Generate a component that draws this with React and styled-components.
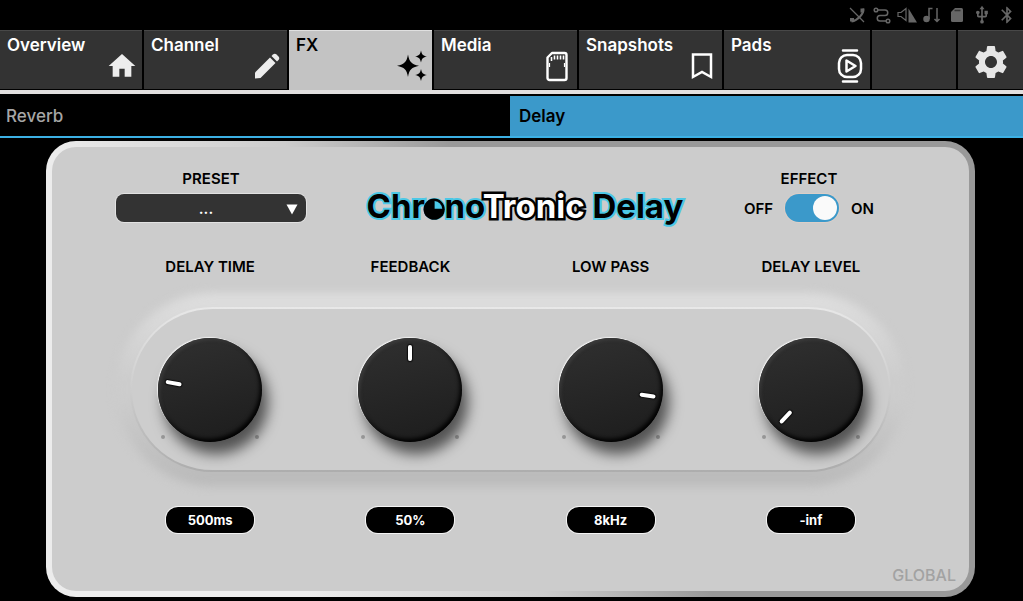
import React, { useState } from 'react';
import styled, { createGlobalStyle } from 'styled-components';
import { MdBluetooth, MdHome, MdSettings, MdUsb } from 'react-icons/md';

const GlobalStyle = createGlobalStyle`
  * {
    box-sizing: border-box;
  }

  body {
    margin: 0;
    background: #000;
    color: #000;
    font-family: 'Inter', 'Liberation Sans', sans-serif;
  }

  button, input, select {
    font: inherit;
    margin: 0;
  }
`;

const Page = styled.div`
  display: flex;
  flex-direction: column;
  min-height: 100vh;
`;

const StatusBar = styled.div`
  display: flex;
  justify-content: flex-end;
  align-items: center;
  gap: 5px;
  height: 30px;
  padding-right: 6px;
  color: #666;

  svg {
    width: 20px;
    height: 20px;
  }
`;

const TabBar = styled.nav`
  display: grid;
  grid-template-columns: 142fr 143fr 143fr 143fr 143fr 146fr 84fr 65fr;
  gap: 2px;
  height: 64px;
  border-bottom: 4px solid #e2dfdf;
`;

const Tab = styled.button`
  display: flex;
  justify-content: space-between;
  height: ${(props) => (props.$active ? '60px' : '59px')};
  padding: 5px 4px 0 7px;
  border: none;
  border-top: 1px solid ${(props) => (props.$active ? '#e0e0e0' : '#484848')};
  background: ${(props) => (props.$active ? '#c3c3c3' : '#333')};
  color: ${(props) => (props.$active ? '#000' : '#fff')};
  font-size: 17px;
  font-weight: 600;
  line-height: 18px;
  cursor: pointer;
`;

const TabIcon = styled.span`
  display: flex;
  justify-content: center;
  align-items: center;
  width: 32px;
  height: 36px;
  margin-top: 12px;

  svg {
    flex: none;
  }
`;

const SettingsTab = styled(Tab)`
  justify-content: center;
  align-items: center;
  padding: 3px 0 0;
  color: #e6e6e6;
`;

const SubTabBar = styled.nav`
  display: grid;
  grid-template-columns: 510fr 513fr;
  margin-top: 2px;
  border-bottom: 2px solid #3cb0e4;
`;

const SubTab = styled.button`
  height: 40px;
  padding: 0 ${(props) => (props.$active ? '9px' : '6px')};
  border: none;
  background: ${(props) => (props.$active ? '#3b99ca' : '#000')};
  color: ${(props) => (props.$active ? '#000' : '#a6a6a6')};
  font-size: 17px;
  font-weight: ${(props) => (props.$active ? 600 : 500)};
  text-align: left;
  cursor: pointer;
`;

const Panel = styled.main`
  margin: 3px 48px 4px 46px;
  padding: 22px 58px 6px;
  border: 6px solid transparent;
  border-radius: 30px;
  background:
    linear-gradient(#ccc, #ccc) padding-box,
    linear-gradient(60deg, #ececec 22%, #ccc 42%, #999 56%) border-box;
`;

const Header = styled.header`
  display: flex;
  justify-content: space-between;
  align-items: flex-start;
  padding: 0 37px 0 6px;
`;

const Field = styled.div`
  display: flex;
  flex-direction: column;
  align-items: center;
  gap: 5px;
`;

const Label = styled.label`
  font-size: 15px;
  font-weight: 600;
  line-height: 20px;
  text-align: center;
`;

const SelectBox = styled.div`
  position: relative;
  width: 190px;
  height: 28px;

  svg {
    position: absolute;
    top: 10px;
    right: 8px;
    pointer-events: none;
  }
`;

const Select = styled.select`
  width: 100%;
  height: 100%;
  padding: 0 10px 0 0;
  appearance: none;
  border: none;
  border-radius: 8px;
  background: #333;
  box-shadow: 0 0 0 1px #e2e2e2;
  color: #fff;
  font-size: 15px;
  font-weight: 600;
  text-align-last: center;
`;

const Logo = styled.h1`
  margin: 21px 0 0;
  color: #000;
  font-size: 33px;
  font-weight: 700;
  line-height: 32px;
  white-space: nowrap;
  paint-order: stroke fill;
  -webkit-text-stroke: 4px #4cc8e6;
`;

const LogoOutline = styled.span`
  color: #fff;
  -webkit-text-stroke: 5px #000;
`;

const LogoClock = styled.span`
  position: relative;

  svg {
    position: absolute;
    left: 0;
    bottom: 0;
    width: 100%;
    overflow: visible;
  }
`;

const SwitchRow = styled.div`
  display: flex;
  align-items: center;
  gap: 12px;
  font-size: 15px;
  font-weight: 600;
`;

const Switch = styled.input`
  display: flex;
  align-items: center;
  width: 54px;
  height: 28px;
  padding: 2px;
  appearance: none;
  border-radius: 14px;
  background: #8a8a8a;
  box-shadow: 0 0 0 1px #dccfc8;
  cursor: pointer;

  &::before {
    content: '';
    width: 24px;
    height: 24px;
    border-radius: 50%;
    background: #fafafa;
  }

  &:checked {
    justify-content: flex-end;
    background: #3b99ca;
  }
`;

const Controls = styled.section`
  display: grid;
  grid-template-columns: repeat(4, 1fr);
  grid-template-rows: 20px 165px auto;
  row-gap: 30px;
  margin-top: 35px;
  justify-items: center;
  align-items: center;
`;

const Groove = styled.div`
  position: relative;
  z-index: 0;
  grid-area: 2 / 1 / 3 / 5;
  justify-self: stretch;
  align-self: stretch;
  margin: 0 20px;

  &::before,
  &::after {
    content: '';
    position: absolute;
    z-index: -1;
    border-radius: 100px;
  }

  &::before {
    inset: -14px;
    background: linear-gradient(#dedede, #ccc 45%, #ccc 55%, #b9b9b9);
    filter: blur(5px);
  }

  &::after {
    inset: 0;
    border: 2px solid transparent;
    background:
      linear-gradient(#cdcdcd, #cdcdcd) padding-box,
      linear-gradient(#e8e8e8, #cdcdcd 50%, #adadad) border-box;
  }
`;

const KnobLabel = styled(Label)`
  grid-row: 1;
  grid-column: ${(props) => props.$column};
`;

const KnobBox = styled.div`
  position: relative;
  z-index: 1;
  grid-row: 2;
  grid-column: ${(props) => props.$column};
  width: 104px;
  height: 104px;

  &::before,
  &::after {
    content: '';
    position: absolute;
    bottom: 3px;
    width: 4px;
    height: 4px;
    border-radius: 50%;
    background: rgba(0, 0, 0, 0.25);
  }

  &::before {
    left: 3px;
  }

  &::after {
    right: 3px;
  }
`;

const KnobInput = styled.input`
  display: block;
  width: 100%;
  height: 100%;
  appearance: none;
  border-radius: 50%;
  background: linear-gradient(165deg, #303030, #1c1c1c);
  box-shadow:
    inset -2px -3px 4px #000,
    inset 2px 2px 3px #3c3c3c,
    -1px -1px 1px #f0f0f0,
    6px 12px 14px rgba(0, 0, 0, 0.6);
  cursor: grab;

  &::-webkit-slider-thumb {
    appearance: none;
    width: 1px;
    height: 1px;
  }
`;

const Pointer = styled.span`
  position: absolute;
  inset: 0;
  pointer-events: none;

  &::before {
    content: '';
    position: absolute;
    top: 7px;
    left: 50px;
    width: 4px;
    height: 16px;
    border-radius: 2px;
    background: #fff;
    box-shadow: 0 0 1px 1px #0c0c0c;
  }
`;

const Readout = styled.output`
  grid-row: 3;
  grid-column: ${(props) => props.$column};
  width: 88px;
  margin-top: 5px;
  border-radius: 12px;
  background: #000;
  box-shadow: 0 0 0 1px #f4f4f4;
  color: #fff;
  font-size: 13px;
  font-weight: 700;
  line-height: 26px;
  text-align: center;
`;

const Scope = styled.p`
  margin: 32px -45px 0 0;
  color: #a2a2a2;
  font-size: 16px;
  font-weight: 500;
  line-height: 20px;
  text-align: right;
`;

const PencilIcon = () => (
  <svg width="28" height="28" viewBox="0 0 28 28" fill="#ededed">
    <path d="M2 20.500 17 5.500l5.500 5.500-15 15L2 26.500z" />
    <path d="m18.500 4 1.500-1.500c1-1 2.500-1 3.500 0l2 2c1 1 1 2.500 0 3.500L24 9.500z" />
  </svg>
);

const SparklesIcon = () => (
  <svg width="30" height="32" viewBox="0 0 30 32" fill="#000">
    <path d="M11 4.500c1.300 7.500 3.500 9.700 11 11.300-7.500 1.600-9.700 3.800-11 11.300C9.700 19.600 7.500 17.400 0 15.800 7.500 14.200 9.700 12 11 4.500z" />
    <path d="M24 .5c.8 4 2 5.200 6 6-4 .8-5.200 2-6 6-.8-4-2-5.200-6-6 4-.8 5.200-2 6-6z" />
    <path d="M24 19c.8 4 2 5.200 6 6-4 .8-5.200 2-6 6-.8-4-2-5.200-6-6 4-.8 5.200-2 6-6z" />
  </svg>
);

const CardIcon = () => (
  <svg width="22" height="31" viewBox="0 0 22 31" fill="none" stroke="#fff">
    <path d="M6 2H18.500a2 2 0 0 1 2 2v23a2 2 0 0 1-2 2H3.500a2 2 0 0 1-2-2V6.500z" strokeWidth="2.400" strokeLinejoin="round" />
    <path d="M5.500 6v4M8.500 4.500v4M11.500 4.500v4M14.500 4.500v4M17.500 4.500v4" strokeWidth="1.600" />
    <path d="M3.500 12v4M18.500 12v4" strokeWidth="1.200" />
  </svg>
);

const BookmarkIcon = () => (
  <svg width="22" height="28" viewBox="0 0 22 28" fill="none" stroke="#fff" strokeWidth="2.500">
    <path d="M2 2.500h18v22.500L11 20l-9 5z" />
  </svg>
);

const PadIcon = () => (
  <svg width="26" height="36" viewBox="0 0 26 36" fill="none" stroke="#fff" strokeWidth="2.500" strokeLinecap="round" strokeLinejoin="round">
    <path d="M6 2.500h14M6 33.500h14" />
    <rect x="2" y="7" width="22" height="22" rx="8" />
    <path d="M9.500 12.500v11l9-5.500z" strokeWidth="2.500" />
  </svg>
);

const PhoneOffIcon = () => (
  <svg viewBox="0 0 20 20" fill="none" stroke="currentColor" strokeWidth="1.300">
    <path d="M3 3l14 14" />
    <path d="M16.500 3.500c.5 5-5.500 12-12 13" strokeWidth="2" />
    <path d="M13.500 3.500h3.500v4h-3.500zM3 13h4v3.500H3z" fill="currentColor" stroke="none" />
  </svg>
);

const RouteIcon = () => (
  <svg viewBox="0 0 20 20" fill="none" stroke="currentColor" strokeWidth="1.500">
    <circle cx="4" cy="5" r="1.800" />
    <circle cx="16" cy="16" r="1.800" />
    <path d="M6 5h7a2.700 2.700 0 0 1 0 5.500H8A2.700 2.700 0 0 0 8 16h6" />
  </svg>
);

const VolumeIcon = () => (
  <svg viewBox="0 0 20 20" fill="none" stroke="currentColor" strokeWidth="1.200">
    <path d="M1 7.500h3L9 3.500v12l-5-4H1z" />
    <path d="M11.500 3.500V17.500H20z" fill="currentColor" stroke="none" />
  </svg>
);

const MidiIcon = () => (
  <svg viewBox="0 0 20 20" fill="none" stroke="currentColor" strokeWidth="1.500">
    <circle cx="4.500" cy="14" r="2.500" fill="currentColor" />
    <path d="M7 14V3.500h3.500M15 3v13.500M12.500 14 15 16.500l2.500-2.500" />
  </svg>
);

const MemoryIcon = () => (
  <svg viewBox="0 0 20 20" fill="currentColor">
    <path d="M8 3h6.500A1.500 1.500 0 0 1 16 4.500v11a1.500 1.500 0 0 1-1.500 1.500h-9A1.500 1.500 0 0 1 4 15.500V7z" />
    <path d="M7.500 5.500h6" stroke="#333" strokeWidth="1.500" />
  </svg>
);

const mainTabs = [
  { name: 'Overview', icon: <MdHome size={32} color="#ededed" /> },
  { name: 'Channel', icon: <PencilIcon /> },
  { name: 'FX', icon: <SparklesIcon /> },
  { name: 'Media', icon: <CardIcon /> },
  { name: 'Snapshots', icon: <BookmarkIcon /> },
  { name: 'Pads', icon: <PadIcon /> },
];

const knobs = [
  { id: 'delay-time', label: 'DELAY TIME', position: 21, text: '500ms' },
  { id: 'feedback', label: 'FEEDBACK', position: 50, text: '50%' },
  { id: 'low-pass', label: 'LOW PASS', position: 86, text: '8kHz' },
  { id: 'delay-level', label: 'DELAY LEVEL', position: 0, text: '-inf' },
];

const Knob = ({ knob, column }) => {
  const [position, setPosition] = useState(knob.position);
  // Full travel is 274 degrees, centred on 12 o'clock
  const angle = -137 + position * 2.74;

  return (
    <>
      <KnobLabel htmlFor={knob.id} $column={column}>{knob.label}</KnobLabel>
      <KnobBox $column={column}>
        <KnobInput
          id={knob.id}
          type="range"
          min="0"
          max="100"
          value={position}
          onChange={(e) => setPosition(Number(e.target.value))}
        />
        <Pointer style={{ transform: `rotate(${angle}deg)` }} />
      </KnobBox>
      <Readout htmlFor={knob.id} $column={column}>{knob.text}</Readout>
    </>
  );
};

const App = () => {
  const [tab, setTab] = useState('FX');
  const [effect, setEffect] = useState('Delay');
  const [enabled, setEnabled] = useState(true);

  return (
    <Page>
      <GlobalStyle />
      <StatusBar>
        <PhoneOffIcon />
        <RouteIcon />
        <VolumeIcon />
        <MidiIcon />
        <MemoryIcon />
        <MdUsb />
        <MdBluetooth />
      </StatusBar>

      <TabBar>
        {mainTabs.map(({ name, icon }) => (
          <Tab key={name} type="button" $active={tab === name} onClick={() => setTab(name)}>
            {name}
            <TabIcon>{icon}</TabIcon>
          </Tab>
        ))}
        <Tab as="div" />
        <SettingsTab type="button" aria-label="Settings">
          <MdSettings size={40} />
        </SettingsTab>
      </TabBar>

      <SubTabBar>
        {['Reverb', 'Delay'].map((name) => (
          <SubTab key={name} type="button" $active={effect === name} onClick={() => setEffect(name)}>
            {name}
          </SubTab>
        ))}
      </SubTabBar>

      <Panel>
        <Header>
          <Field>
            <Label htmlFor="preset">PRESET</Label>
            <SelectBox>
              <Select id="preset">
                <option>...</option>
              </Select>
              <svg width="12" height="11" viewBox="0 0 12 11" fill="#fff">
                <path d="M.5.500h11L6 10.500z" />
              </svg>
            </SelectBox>
          </Field>

          <Logo>
            Chr
            <LogoClock>
              o
              <svg viewBox="0 0 20 30">
                <circle cx="10" cy="13" r="10.500" fill="#000" />
                <path d="M10.500 12.500V5a8 8 0 0 1 7.500 7.500z" fill="#4cc8e6" />
              </svg>
            </LogoClock>
            no
            <LogoOutline>Tronic</LogoOutline>
            {' Delay'}
          </Logo>

          <Field>
            <Label htmlFor="effect">EFFECT</Label>
            <SwitchRow>
              <span>OFF</span>
              <Switch
                id="effect"
                type="checkbox"
                role="switch"
                checked={enabled}
                onChange={(e) => setEnabled(e.target.checked)}
              />
              <span>ON</span>
            </SwitchRow>
          </Field>
        </Header>

        <Controls>
          <Groove />
          {knobs.map((knob, index) => (
            <Knob key={knob.id} knob={knob} column={index + 1} />
          ))}
        </Controls>

        <Scope>GLOBAL</Scope>
      </Panel>
    </Page>
  );
};

export default App;
